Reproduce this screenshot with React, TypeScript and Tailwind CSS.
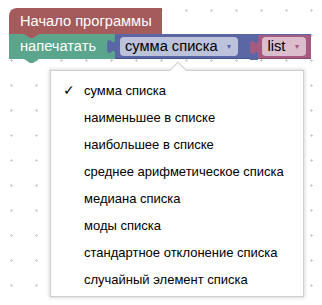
const items = [
  "сумма списка",
  "наименьшее в списке",
  "наибольшее в списке",
  "среднее арифметическое списка",
  "медиана списка",
  "моды списка",
  "стандартное отклонение списка",
  "случайный элемент списка",
];

// the little puzzle tab a value block plugs in with, sitting on the parent block
const OutputTab = ({ color, under }: { color: string; under: string }) => (
  <div className={`shrink-0 ${under}`}>
    <svg width="8" height="25" viewBox="0 0 8 25" className="block">
      <path d="M8 0 V5 C8 15 0 -3 0 12.5 S8 10 8 20 V25 Z" fill={color} />
    </svg>
  </div>
);

const Notch = ({ color }: { color: string }) => (
  <svg width="15" height="4" viewBox="0 0 15 4" className="absolute left-[15px] top-full">
    <path d="M0 0 L6 4 L9 4 L15 0 Z" fill={color} />
  </svg>
);

const Pill = ({ label, bg, arrow }: { label: string; bg: string; arrow: string }) => (
  <div className={`flex h-[19px] items-center gap-[8px] rounded-[4px] pl-[5px] pr-[6px] ${bg}`}>
    <span className="text-[14.67px] leading-none text-black">{label}</span>
    <span className={`text-[7px] leading-none ${arrow}`}>▼</span>
  </div>
);

export default function App() {
  return (
    <div className="relative h-[305px] w-[322px] overflow-hidden bg-white font-['Liberation_Sans',Arial,sans-serif]">
      <svg className="absolute inset-0" width="322" height="305">
        <defs>
          <pattern id="grid" width="25" height="25" patternUnits="userSpaceOnUse">
            <path d="M10 10.5 H13 M11.5 9 V12" stroke="#cfcfcf" strokeWidth="1" />
          </pattern>
        </defs>
        <rect width="322" height="305" fill="url(#grid)" />
      </svg>

      {/* blocks */}
      <div className="absolute left-[9px] top-[8px] flex flex-col items-start">
        <div className="relative z-10 flex h-[26px] w-[153px] items-center rounded-tl-[8px] bg-[#a55b5b] pl-[11px]">
          <span className="text-[14.67px] leading-none text-white">Начало программы</span>
          <Notch color="#a55b5b" />
        </div>
        <div className="flex items-start">
          <div className="relative flex h-[25px] w-[98px] items-center bg-[#5ba58c] pl-[11px]">
            <span className="text-[14.67px] leading-none text-white">напечатать</span>
            <Notch color="#5ba58c" />
          </div>
          <OutputTab color="#5b67a5" under="bg-[#5ba58c]" />
          <div className="flex h-[25px] items-center border-b border-[#48528a] bg-[#5b67a5] pl-[5px] pr-[12px]">
            <Pill label="сумма списка" bg="bg-[#bdc2db]" arrow="text-[#5b67a5]" />
          </div>
          <div className="flex h-[25px] items-start bg-[#5b67a5] pt-[1px]">
            <OutputTab color="#a55b80" under="bg-[#5b67a5]" />
            <div className="flex h-[24px] items-center border-b border-[#8a4a6a] bg-[#a55b80] pl-[4px] pr-[5px]">
              <Pill label="list" bg="bg-[#dbbdcc]" arrow="text-[#a55b80]" />
            </div>
          </div>
        </div>
      </div>

      {/* dropdown */}
      <div className="absolute left-[50px] top-[70px] w-[254px] border border-[#cfcfcf] bg-white pb-[3px] pt-[6px] shadow-[0_0_3px_1px_rgba(0,0,0,0.15)]">
        <div className="absolute left-[121px] top-[-7px] h-[12px] w-[12px] rotate-45 border-l border-t border-[#cfcfcf] bg-white" />
        {items.map((t, i) => (
          <div key={t} className="relative flex h-[27px] items-center text-[13px] text-black">
            <span className="w-[33px] pl-[12px] text-[14px]">{i === 0 ? "✓" : ""}</span>
            <span>{t}</span>
          </div>
        ))}
      </div>
    </div>
  );
}
